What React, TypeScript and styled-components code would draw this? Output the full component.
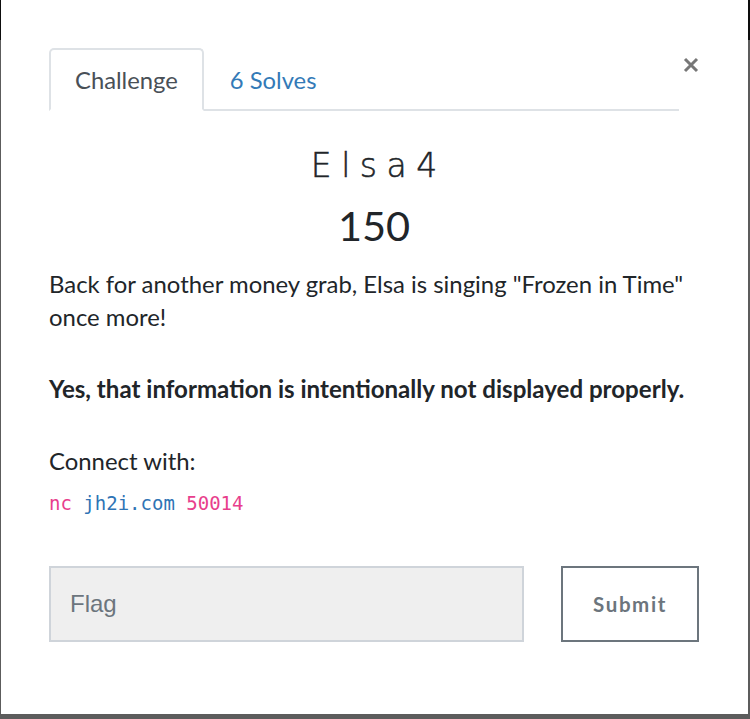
import styled, { createGlobalStyle } from 'styled-components'

const GlobalStyle = createGlobalStyle`
  html, body {
    margin: 0;
    padding: 0;
  }
  body {
    background: linear-gradient(#0d0d0d 0, #0d0d0d 40px, #5c5c5c 40px);
    font-family: 'Lato', 'Liberation Sans', sans-serif;
    color: #212529;
  }
`

const Backdrop = styled.div`
  height: 719px;
  padding: 0 2px 0 1px;
  box-sizing: border-box;
`

const Modal = styled.div`
  height: 714px;
  background: #fff;
  padding: 48px 49px 0 48px;
  box-sizing: border-box;
`

const Header = styled.div`
  display: flex;
  align-items: flex-start;
`

const Tabs = styled.ul`
  flex: 1;
  display: flex;
  margin: 0;
  padding: 0;
  list-style: none;
  border-bottom: 2px solid #dee2e6;
`

const Tab = styled.li<{ $active?: boolean }>`
  box-sizing: border-box;
  height: 63px;
  margin-bottom: -2px;
  padding: 0 24px;
  display: flex;
  align-items: center;
  font-size: 23.8px;
  color: ${({ $active }) => ($active ? '#495057' : '#337ab7')};
  border: 2px solid ${({ $active }) => ($active ? '#dee2e6' : 'transparent')};
  border-bottom-color: ${({ $active }) => ($active ? '#fff' : 'transparent')};
  border-radius: 5px 5px 0 0;
  background: ${({ $active }) => ($active ? '#fff' : 'transparent')};
`

const Close = styled.button`
  width: 20px;
  height: 22px;
  margin: 6px 0 0;
  padding: 0;
  border: 0;
  background: none;
  display: flex;
  align-items: center;
  justify-content: flex-end;
`

const Title = styled.h3`
  margin: 35px 0 0;
  text-align: center;
  font-family: 'DejaVu Sans', 'Lato', sans-serif;
  font-size: 33px;
  font-weight: 200;
  letter-spacing: 9.5px;
  text-indent: 9.5px;
  line-height: 40px;
  -webkit-text-stroke: 0.5px #212529;
`

const Value = styled.h4`
  margin: 14px 0 0;
  text-align: center;
  font-size: 41.5px;
  font-weight: 400;
  line-height: 50px;
`

const Description = styled.div`
  margin-top: 17px;
  font-size: 23.9px;
  line-height: 33px;
  p {
    margin: 0 0 39px;
  }
  strong {
    font-weight: 700;
    font-size: 24.1px;
  }
`

const Plain = styled.p`
  && {
    margin: 0;
  }
`

const CodeLine = styled.div`
  margin-top: 7px;
  line-height: 33px;
`

const Code = styled.code`
  font-family: 'DejaVu Sans Mono', 'Liberation Mono', monospace;
  font-size: 19px;
  color: #e83e8c;
`

const Host = styled.span`
  color: #2f74b5;
`

const FlagForm = styled.form`
  display: flex;
  gap: 37px;
  margin-top: 46px;
`

const FlagInput = styled.input`
  flex: 1;
  min-width: 0;
  height: 76px;
  box-sizing: border-box;
  padding: 0 19px;
  border: 2px solid #cfd4da;
  background: #efefef;
  font-family: 'Liberation Sans', Arial, sans-serif;
  font-size: 24px;
  color: #495057;
  outline: none;
  &::placeholder {
    color: #6c757d;
  }
`

const SubmitButton = styled.button`
  width: 138px;
  height: 76px;
  box-sizing: border-box;
  border: 2px solid #6c757d;
  background: #fff;
  color: #6c757d;
  font-family: 'Lato', sans-serif;
  font-size: 20.5px;
  font-weight: 700;
  letter-spacing: 1.6px;
`

export default function App() {
  return (
    <>
      <GlobalStyle />
      <Backdrop>
        <Modal>
          <Header>
            <Tabs>
              <Tab $active>Challenge</Tab>
              <Tab>6 Solves</Tab>
            </Tabs>
            <Close aria-label="Close">
              <svg width="16" height="16" viewBox="0 0 16 16">
                <path d="M2 2 L14 14 M14 2 L2 14" stroke="#777" strokeWidth="3" />
              </svg>
            </Close>
          </Header>
          <Title>Elsa4</Title>
          <Value>150</Value>
          <Description>
            <p>Back for another money grab, Elsa is singing "Frozen in Time" once more!</p>
            <p>
              <strong>Yes, that information is intentionally not displayed properly.</strong>
            </p>
            <Plain>Connect with:</Plain>
            <CodeLine>
              <Code>
                nc <Host>jh2i.com</Host> 50014
              </Code>
            </CodeLine>
          </Description>
          <FlagForm onSubmit={(e) => e.preventDefault()}>
            <FlagInput placeholder="Flag" />
            <SubmitButton type="submit">Submit</SubmitButton>
          </FlagForm>
        </Modal>
      </Backdrop>
    </>
  )
}
